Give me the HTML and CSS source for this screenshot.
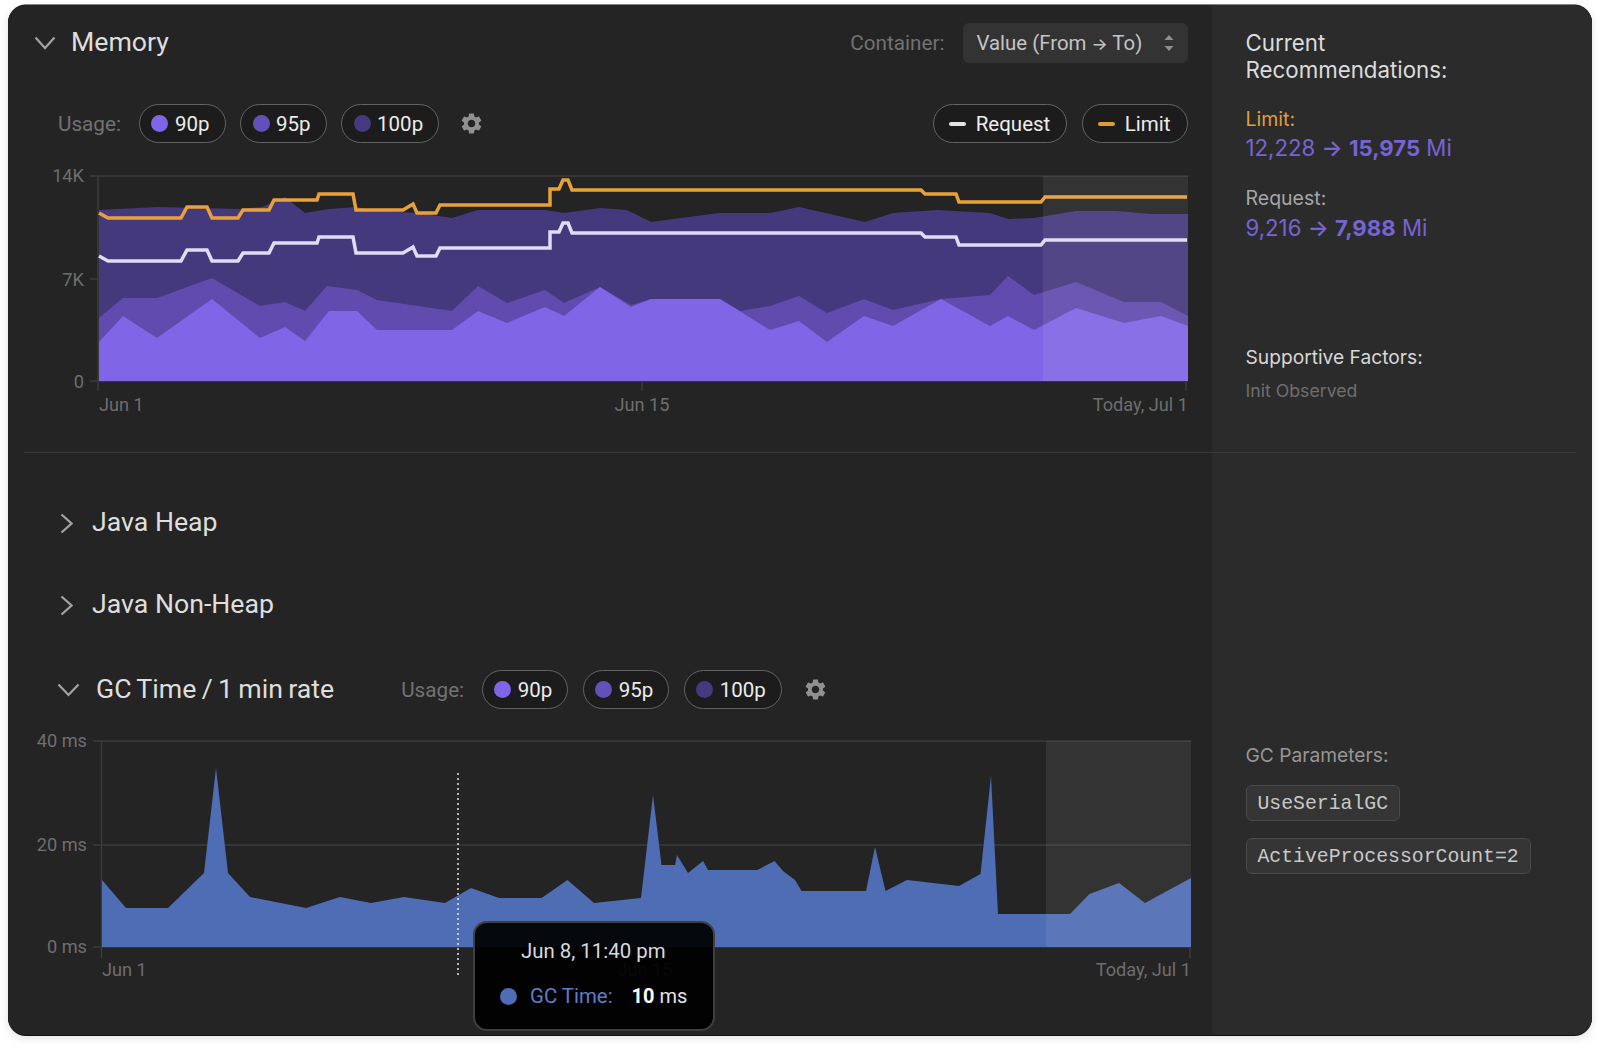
FILE: index.html
```html
<!DOCTYPE html>
<html lang="en">
<head>
<meta charset="utf-8">
<title>Memory</title>
<link rel="stylesheet" href="styles.css">
</head>
<body>
<svg class="defs" width="0" height="0" aria-hidden="true">
  <defs>
    <path id="gear" d="M19.14 12.94c.04-.3.06-.61.06-.94 0-.32-.02-.64-.07-.94l2.03-1.58c.18-.14.23-.41.12-.61l-1.92-3.32c-.12-.22-.37-.29-.59-.22l-2.39.96c-.5-.38-1.03-.7-1.62-.94l-.36-2.54c-.04-.24-.24-.41-.48-.41h-3.84c-.24 0-.43.17-.47.41l-.36 2.54c-.59.24-1.13.57-1.62.94l-2.39-.96c-.22-.08-.47 0-.59.22L2.74 8.87c-.12.21-.08.47.12.61l2.03 1.58c-.05.3-.09.63-.09.94s.02.64.07.94l-2.03 1.58c-.18.14-.23.41-.12.61l1.92 3.32c.12.22.37.29.59.22l2.39-.96c.5.38 1.03.7 1.62.94l.36 2.54c.05.24.24.41.48.41h3.84c.24 0 .44-.17.47-.41l.36-2.54c.59-.24 1.13-.56 1.62-.94l2.39.96c.22.08.47 0 .59-.22l1.92-3.32c.12-.22.07-.47-.12-.61l-2.01-1.58zM12 15.6c-1.98 0-3.6-1.62-3.6-3.6s1.62-3.6 3.6-3.6 3.6 1.62 3.6 3.6-1.62 3.6-3.6 3.6z"/>
    <path id="limit-line" d="M99 213 108 218H181L187 207H207L212 218H238L243 210H269L274 200H317L319 194H353L356 210H403L413 204 417 213H436L440 205H550V189H559L563 180H568L572 190H921L925 194H956L959 202H1041L1045 197H1187"/>
  </defs>
</svg>
<main class="card">
  <section class="row row-top">
    <div class="main-cell">
      <header class="section-head">
        <svg class="chev chev-memory" viewBox="0 0 22 14"><path d="M1.5 1.5 11 12 20.500 1.500"/></svg>
        <h2 class="title">Memory</h2>
        <div class="container-select">
          <span class="muted-label">Container:</span>
          <div class="select">
            <span>Value (From <span class="arrow">→</span> To)</span>
            <svg class="select-arrows" viewBox="0 0 10 16"><path d="M5 0 9.500 5H.5zM5 16 .5 11H9.500z"/></svg>
          </div>
        </div>
      </header>
      <div class="controls">
        <span class="muted-label usage">Usage:</span>
        <span class="pill"><i class="dot dot-90"></i>90p</span>
        <span class="pill"><i class="dot dot-95"></i>95p</span>
        <span class="pill"><i class="dot dot-100"></i>100p</span>
        <svg class="gear" viewBox="0 0 24 24"><use href="#gear"/></svg>
        <span class="spacer"></span>
        <span class="pill pill-line pill-request"><i class="dash dash-request"></i>Request</span>
        <span class="pill pill-line"><i class="dash dash-limit"></i>Limit</span>
      </div>
      <svg class="chart chart-memory" viewBox="8 160 1204 260">
        <line class="grid" x1="90" y1="176" x2="1188" y2="176"/>
        <line class="grid" x1="90" y1="279" x2="1188" y2="279"/>
        <line class="grid" x1="90" y1="381" x2="1188" y2="381"/>
        <line class="grid" x1="98" y1="176" x2="98" y2="391"/>
        <line class="grid" x1="642" y1="381" x2="642" y2="391"/>
        <line class="grid" x1="1186" y1="381" x2="1186" y2="391"/>
        <polygon class="area-100" points="99,210 157,207 239,209 262,207 285,197 305,213 329,209 357,207 377,211 419,213 452,218 478,210 545,210 564,213 600,208 627,210 651,222 719,213 770,213 799,207 865,222 893,213 937,210 990,213 1008,219 1034,218 1076,211 1117,211 1151,214 1188,214 1188,381 99,381"/>
        <polygon class="area-95" points="99,318 123,298 157,298 212,278 260,306 285,302 305,311 327,286 357,290 377,300 452,311 478,286 507,303 545,290 564,303 600,287 631,305 651,299 720,299 740,311 770,306 799,296 827,313 864,299 893,310 941,299 990,295 1008,276 1034,295 1076,282 1124,302 1161,302 1188,316 1188,381 99,381"/>
        <polygon class="area-90" points="99,342 123,316 157,338 212,299 260,338 285,327 305,341 329,311 357,311 377,330 452,330 478,311 507,323 545,307 564,316 600,287 631,307 651,299 720,299 770,330 799,321 827,342 864,316 893,326 941,299 990,326 1008,316 1034,330 1076,308 1124,323 1161,316 1188,326 1188,381 99,381"/>
        <use href="#limit-line" class="line-request" y="43"/>
        <use href="#limit-line" class="line-limit"/>
        <rect class="forecast" x="1043" y="176" width="145" height="205"/>
        <text class="tick end" x="84" y="182">14K</text>
        <text class="tick end" x="84" y="286">7K</text>
        <text class="tick end" x="84" y="388">0</text>
        <text class="tick" x="99" y="411">Jun 1</text>
        <text class="tick mid" x="642" y="411">Jun 15</text>
        <text class="tick end" x="1188" y="411">Today, Jul 1</text>
      </svg>
    </div>
    <aside class="side-cell side-top">
      <h3 class="side-title">Current<br>Recommendations:</h3>
      <p class="rec-label rec-limit">Limit:</p>
      <p class="rec-value">12,228 <span class="arrow">→</span> <b>15,975</b> Mi</p>
      <p class="rec-label rec-request">Request:</p>
      <p class="rec-value rec-value-request">9,216 <span class="arrow">→</span> <b>7,988</b> Mi</p>
      <p class="factors-title">Supportive Factors:</p>
      <p class="factors-value">Init Observed</p>
    </aside>
  </section>
  <div class="divider"><span></span></div>
  <section class="row row-bottom">
    <div class="main-cell main-bottom">
      <header class="section-head collapsed">
        <svg class="chev chev-right" viewBox="0 0 13 21"><path d="M1.500 1.500 11.500 10.500 1.500 19.500"/></svg>
        <h2 class="title">Java Heap</h2>
      </header>
      <header class="section-head collapsed nonheap">
        <svg class="chev chev-right" viewBox="0 0 13 21"><path d="M1.500 1.500 11.500 10.500 1.500 19.500"/></svg>
        <h2 class="title">Java Non-Heap</h2>
      </header>
      <header class="section-head gc-head">
        <svg class="chev chev-gc" viewBox="0 0 23 14"><path d="M1.500 1.500 11.500 12 21.500 1.500"/></svg>
        <h2 class="title gc-title">GC Time / 1 min rate</h2>
        <span class="muted-label usage gc-usage">Usage:</span>
        <span class="pill"><i class="dot dot-90"></i>90p</span>
        <span class="pill"><i class="dot dot-95"></i>95p</span>
        <span class="pill"><i class="dot dot-100"></i>100p</span>
        <svg class="gear" viewBox="0 0 24 24"><use href="#gear"/></svg>
      </header>
      <div class="chart-wrap">
        <svg class="chart chart-gc" viewBox="8 725 1204 260">
          <line class="grid" x1="93" y1="741" x2="1191" y2="741"/>
          <line class="grid" x1="93" y1="845" x2="1191" y2="845"/>
          <line class="grid" x1="93" y1="947" x2="1191" y2="947"/>
          <line class="grid" x1="101.500" y1="741" x2="101.500" y2="958"/>
          <line class="grid" x1="1190" y1="947" x2="1190" y2="958"/>
          <polygon class="area-gc" points="102,880 126,908 168,908 204,873 216,768 228,873 250,897 306,908 340,897 371,903 404,897 445,903 471,888 499,898 541.500,898 567.500,880 594,903 641,898 653,795 661.500,865 675,865 677,855 688,873 703,861 708,870 757.500,870 774.500,861 783,871 795,880 801.600,891 866,891 875,847 885.500,891 907,880 959,886 980.500,874 991,776 998,914 1070,914 1089.500,894 1119,883 1145,903 1191,878 1191,947 102,947"/>
          <rect class="forecast" x="1046" y="741" width="145" height="206"/>
          <line class="hover-line" x1="458" y1="773" x2="458" y2="978"/>
          <text class="tick end" x="87" y="747">40 ms</text>
          <text class="tick end" x="87" y="851">20 ms</text>
          <text class="tick end" x="87" y="953">0 ms</text>
          <text class="tick" x="102" y="976">Jun 1</text>
          <text class="tick mid" x="645" y="976">Jun 15</text>
          <text class="tick end" x="1191" y="976">Today, Jul 1</text>
        </svg>
        <div class="tooltip">
          <div class="tooltip-date">Jun 8, 11:40 pm</div>
          <div class="tooltip-row">
            <i class="dot dot-gc"></i>
            <span class="tooltip-name">GC Time:</span>
            <span class="tooltip-value"><b>10</b> ms</span>
          </div>
        </div>
      </div>
    </div>
    <aside class="side-cell side-bottom">
      <p class="params-title">GC Parameters:</p>
      <code class="chip">UseSerialGC</code>
      <code class="chip chip-second">ActiveProcessorCount=2</code>
    </aside>
  </section>
</main>
</body>
</html>
```
FILE: styles.css
```css
* { box-sizing: border-box; }
html, body { margin: 0; padding: 0; background: #fff; }
body { height: 1047px; overflow: hidden; font-family: Roboto, "Noto Sans", sans-serif; }
.defs { position: absolute; }
p, h2, h3 { margin: 0; font-weight: 400; }

.card {
  width: 1584px;
  height: 1030px;
  margin: 5px 8px 12px;
  display: flex;
  flex-direction: column;
  background: #242424;
  border-radius: 18px;
  overflow: hidden;
  box-shadow: 0 -.5px 0 #111, 0 1px 0 #111, 0 3px 8px rgba(0, 0, 0, .12);
}
.row { display: flex; }
.row-top { height: 447px; }
.row-bottom { height: 582px; }
.main-cell { width: 1204px; flex: none; }
.side-cell { flex: 1; background: #2b2b2b; padding-left: 33.5px; display: flex; flex-direction: column; align-items: flex-start; }

.divider { height: 1px; flex: none; background: linear-gradient(to right, #242424 1204px, #2b2b2b 1204px); padding: 0 16px; }
.divider span { display: block; height: 1px; background: #393939; }

/* section headers */
.section-head { display: flex; align-items: center; height: 40px; }
.row-top .section-head { margin-top: 18px; padding: 0 24px 0 26px; }
.title { font-size: 26.7px; line-height: 40px; margin-bottom: 2px; color: #dedede; white-space: nowrap; }
.gc-title { word-spacing: -1.3px; }
.chev { flex: none; fill: none; stroke: #a3a3a3; stroke-width: 2.2; }
.chev-memory { width: 22px; height: 14px; margin-right: 15px; }
.chev-right { width: 13px; height: 21px; margin-right: 19.5px; }
.chev-gc { width: 23px; height: 14px; margin-right: 16px; }

.container-select { margin-left: auto; display: flex; align-items: center; gap: 18px; }
.muted-label { font-size: 20.7px; color: #727272; white-space: nowrap; }
.select {
  width: 225.5px;
  height: 40px;
  border-radius: 6px;
  background: #333;
  padding: 0 14px;
  display: flex;
  align-items: center;
  justify-content: space-between;
  font-size: 20.4px;
  color: #c4c4c4;
  white-space: nowrap;
}
.select-arrows { width: 10px; height: 16px; fill: #8f8f8f; flex: none; }
.arrow { font-family: Inter, sans-serif; font-weight: 600; }
.select .arrow { font-weight: 500; font-size: 17px; }

/* pills */
.controls { display: flex; align-items: center; height: 39px; margin-top: 41px; padding: 0 24px 0 50px; gap: 14px; }
.usage { margin-right: 4px; }
.pill {
  height: 39px;
  display: inline-flex;
  align-items: center;
  gap: 6.5px;
  padding: 0 15px 0 11.5px;
  border: 1.5px solid #636363;
  border-radius: 20px;
  background: #1c1c1c;
  color: #ececec;
  font-size: 20.5px;
  white-space: nowrap;
  flex: none;
}
.controls .pill + .pill { margin-left: .5px; }
.dot { display: block; width: 17px; height: 17px; border-radius: 50%; flex: none; }
.dot-90 { background: #7f66e8; }
.dot-95 { background: #6350b8; }
.dot-100 { background: #47397f; }
.dot-gc { background: #4f6db5; }
.gear { width: 25px; height: 25px; fill: #909090; flex: none; margin-left: 6px; }
.spacer { flex: 1; }
.pill-line { gap: 10px; padding: 0 16.5px 0 15px; }
.pill-request { padding-right: 16px; }
.dash { display: block; width: 17px; height: 4px; border-radius: 2px; flex: none; }
.dash-request { background: #e4e4e4; }
.dash-limit { background: #e09c35; }

/* charts */
.chart { display: block; width: 1204px; height: 260px; }
.chart-memory { margin-top: 17px; }
.grid { stroke: #3b3b3b; stroke-width: 1.500; }
.area-100 { fill: #45397d; }
.area-95 { fill: #604cae; }
.area-90 { fill: #7f66e6; }
.area-gc { fill: #4f6db5; }
.line-limit, .line-request { fill: none; stroke-width: 3.5; }
.line-limit { stroke: #e8a13a; }
.line-request { stroke: #e0dcf5; }
.forecast { fill: #fff; fill-opacity: .07; }
.hover-line { stroke: #e6e6e6; stroke-width: 1.500; stroke-dasharray: 2 3; }
.tick { font-family: Roboto, sans-serif; font-size: 18.2px; fill: #6e6e6e; }
.end { text-anchor: end; }
.mid { text-anchor: middle; }

/* lower section */
.main-bottom { padding-top: 50px; }
.collapsed { padding-left: 51.5px; }
.nonheap { margin-top: 42px; }
.gc-head { margin-top: 45px; height: 39px; padding-left: 49px; }
.gc-usage { margin: 0 17.5px 0 67px; }
.gc-head .pill + .pill { margin-left: 14.5px; }
.gc-head .gear { margin-left: 21px; }
.chart-wrap { position: relative; margin-top: 16px; }
.tooltip {
  position: absolute;
  left: 465px;
  top: 196px;
  width: 242px;
  height: 110px;
  border: 2px solid #3f3f3f;
  border-radius: 14px;
  background: rgba(0, 0, 0, .93);
  color: #dadada;
  font-size: 20.4px;
  padding: 15px 0 0 25px;
}
.tooltip-date { line-height: 26px; padding-left: 21px; }
.tooltip-row { display: flex; align-items: center; margin-top: 19px; line-height: 26px; }
.tooltip-name { color: #5f7dc8; margin-left: 13px; }
.tooltip-value { margin-left: 19px; color: #e4e4e4; font-size: 20px; }
.tooltip-value b { font-weight: 700; color: #fff; }

/* side */
.side-top { padding-top: 24px; }
.side-title { font-size: 22.3px; line-height: 27px; color: #dcdcdc; font-weight: 400; font-family: Inter, Roboto, sans-serif; }
.rec-label { font-family: Inter, Roboto, sans-serif; line-height: 24px; }
.rec-limit { color: #df9f3c; font-size: 19.5px; margin-top: 24px; }
.rec-request { color: #a6a6a6; font-size: 19.5px; margin-top: 23px; }
.rec-value { font-family: Inter, Roboto, sans-serif; font-size: 22.2px; line-height: 30px; margin-top: 2px; color: #7664d2; white-space: nowrap; }
.rec-value-request { margin-top: 3px; }
.rec-value b { font-weight: 700; }
.factors-title { font-family: Inter, Roboto, sans-serif; font-size: 19.2px; line-height: 24px; margin-top: 102px; color: #d8d8d8; }
.factors-value { font-family: Inter, Roboto, sans-serif; font-size: 17.7px; line-height: 24px; margin-top: 10px; color: #6f6f6f; }
.side-bottom { padding-top: 289.5px; }
.params-title { font-family: Inter, Roboto, sans-serif; font-size: 19.2px; line-height: 24px; color: #969696; }
.chip {
  display: block;
  height: 36px;
  line-height: 36px;
  padding: 0 11px;
  margin-top: 18px;
  font-family: "Liberation Mono", monospace;
  font-size: 19.8px;
  color: #c8c8c8;
  background: #353535;
  border: 1.5px solid #4a4a4a;
  border-radius: 6px;
  white-space: nowrap;
}
.chip-second { margin-top: 17px; }
```
